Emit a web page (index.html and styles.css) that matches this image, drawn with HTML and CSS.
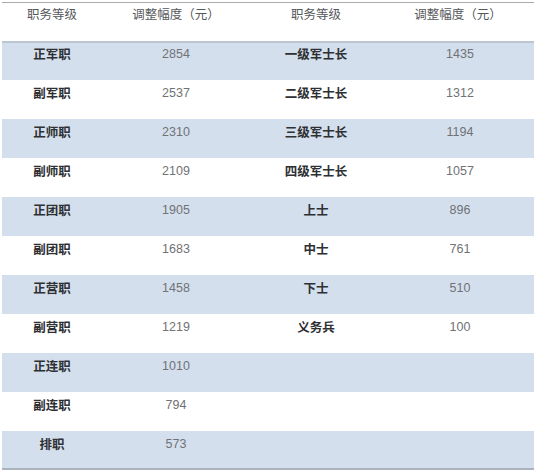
FILE: index.html
```html
<!DOCTYPE html>
<html>
<head>
<meta charset="utf-8">
<link rel="stylesheet" href="styles.css">
</head>
<body>
<div class="table">
  <div class="row head">
    <div class="c c1">职务等级</div><div class="c c2">调整幅度（元）</div><div class="c c3">职务等级</div><div class="c c4">调整幅度（元）</div>
  </div>
  <div class="row shade first">
    <div class="c c1 lab">正军职</div><div class="c c2 num">2854</div><div class="c c3 lab">一级军士长</div><div class="c c4 num">1435</div>
  </div>
  <div class="row">
    <div class="c c1 lab">副军职</div><div class="c c2 num">2537</div><div class="c c3 lab">二级军士长</div><div class="c c4 num">1312</div>
  </div>
  <div class="row shade">
    <div class="c c1 lab">正师职</div><div class="c c2 num">2310</div><div class="c c3 lab">三级军士长</div><div class="c c4 num">1194</div>
  </div>
  <div class="row">
    <div class="c c1 lab">副师职</div><div class="c c2 num">2109</div><div class="c c3 lab">四级军士长</div><div class="c c4 num">1057</div>
  </div>
  <div class="row shade">
    <div class="c c1 lab">正团职</div><div class="c c2 num">1905</div><div class="c c3 lab">上士</div><div class="c c4 num">896</div>
  </div>
  <div class="row">
    <div class="c c1 lab">副团职</div><div class="c c2 num">1683</div><div class="c c3 lab">中士</div><div class="c c4 num">761</div>
  </div>
  <div class="row shade">
    <div class="c c1 lab">正营职</div><div class="c c2 num">1458</div><div class="c c3 lab">下士</div><div class="c c4 num">510</div>
  </div>
  <div class="row">
    <div class="c c1 lab">副营职</div><div class="c c2 num">1219</div><div class="c c3 lab">义务兵</div><div class="c c4 num">100</div>
  </div>
  <div class="row shade">
    <div class="c c1 lab">正连职</div><div class="c c2 num">1010</div><div class="c c3"></div><div class="c c4"></div>
  </div>
  <div class="row">
    <div class="c c1 lab">副连职</div><div class="c c2 num">794</div><div class="c c3"></div><div class="c c4"></div>
  </div>
  <div class="row shade last">
    <div class="c c1 lab">排职</div><div class="c c2 num">573</div><div class="c c3"></div><div class="c c4"></div>
  </div>
</div>
</body>
</html>
```

FILE: styles.css
```css
html, body {
  margin: 0;
  padding: 0;
  background: #ffffff;
}
body {
  padding: 2px 3px 0 2px;
  font-family: "Liberation Sans", "Noto Sans CJK SC", sans-serif;
  font-size: 13px;
}
.table {
  width: 532px;
  border-top: 1px solid #a8acb0;
}
.row {
  display: grid;
  grid-template-columns: 100px 148px 132px 152px;
  height: 39px;
  box-sizing: border-box;
  padding-top: 5px;
}
.row.head {
  height: 38px;
  padding-top: 3px;
}
.c {
  text-align: center;
  line-height: 16px;
  white-space: nowrap;
}
.head .c {
  color: #55575a;
  font-family: "Noto Sans CJK SC", sans-serif;
  font-size: 12.5px;
}
.shade {
  background: #d4dfed;
}
.first {
  border-top: 2px solid #bcc6d2;
  padding-top: 3px;
}
.last {
  border-bottom: 2px solid #aab3bd;
}
.lab {
  font-family: "Noto Sans CJK SC", sans-serif;
  font-weight: 700;
  color: #2e3033;
  font-size: 12.5px;
}
.num {
  color: #707275;
  font-size: 12.5px;
}
.c4.num {
  padding-left: 4px;
}
```
